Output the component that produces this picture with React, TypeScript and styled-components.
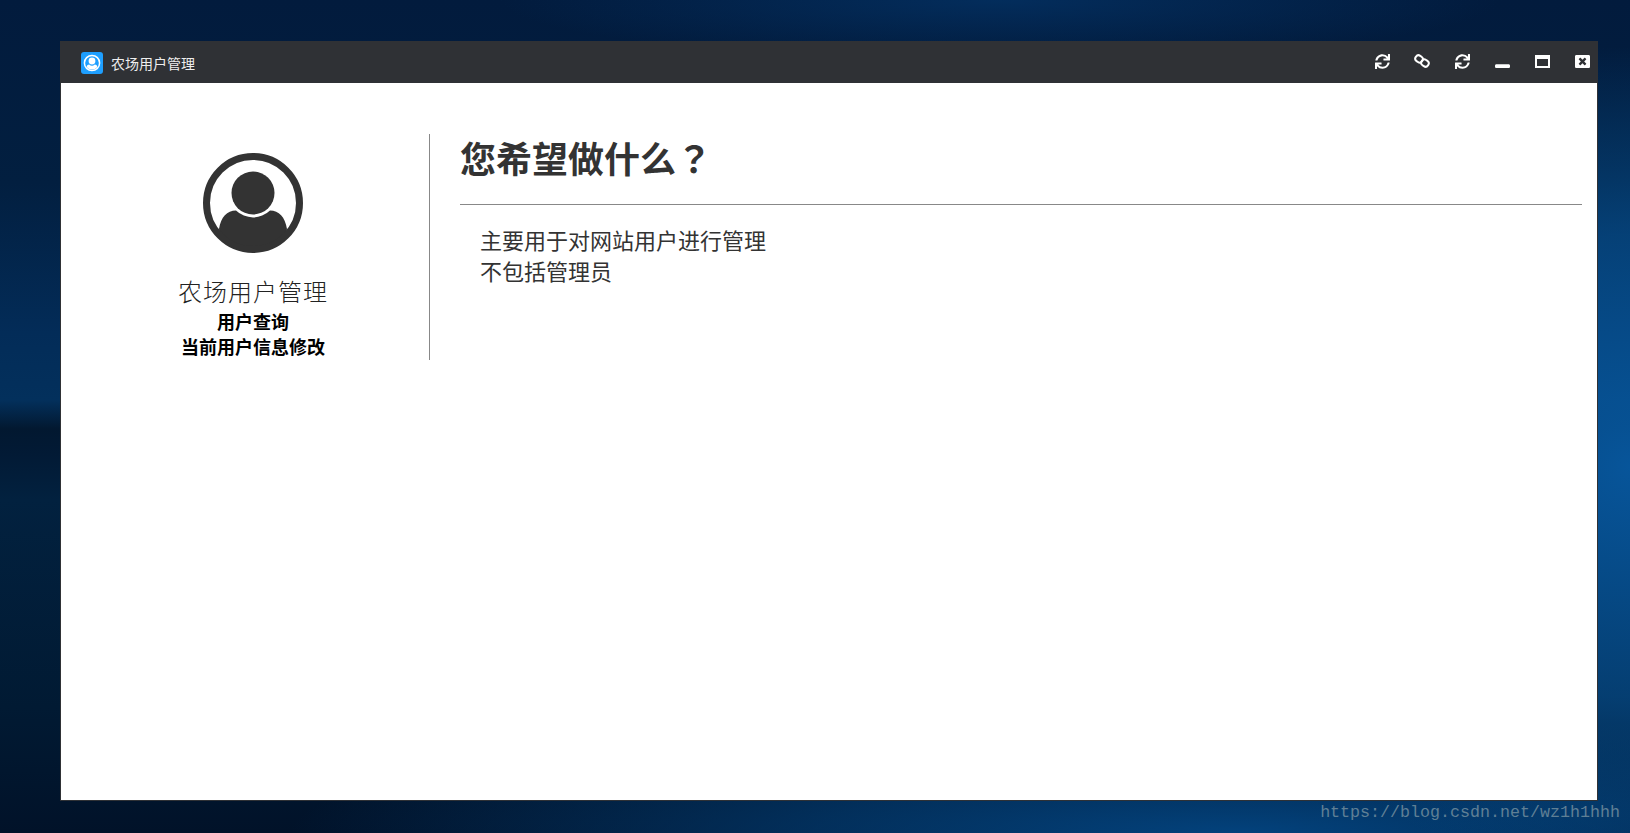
import React from "react";
import styled, { createGlobalStyle } from "styled-components";
import { FaSync, FaWindowClose, FaWindowMinimize } from "react-icons/fa";

const GlobalStyle = createGlobalStyle`
  html, body {
    margin: 0;
    padding: 0;
  }
  * {
    box-sizing: border-box;
  }
`;

const LinkIcon = () => (
  <svg width="16" height="16" viewBox="0 0 16 16">
    <g fill="none" stroke="#fff" strokeWidth="2" transform="rotate(35 8 8)">
      <rect x="0.6" y="4.8" width="7.6" height="6.4" rx="3" />
      <rect x="7.8" y="4.8" width="7.6" height="6.4" rx="3" />
    </g>
  </svg>
);

const MaximizeIcon = () => (
  <svg width="15" height="13" viewBox="0 0 15 13">
    <path d="M0 0 H15 V13 H0 Z M2 4 V11 H13 V4 Z" fill="#fff" fillRule="evenodd" />
  </svg>
);

const AppLogo = () => (
  <svg width="22" height="22" viewBox="0 0 22 22">
    <rect width="22" height="22" rx="3" fill="#1e9fff" />
    <circle cx="11" cy="11" r="7.6" fill="none" stroke="#fff" strokeWidth="1.5" />
    <circle cx="11" cy="9" r="3.4" fill="#fff" />
    <path
      d="M5.6 15 C6 13.2 7 12.6 8.2 12.5 A4 4 0 0 0 13.8 12.5 C15 12.6 16 13.2 16.4 15 A7 7 0 0 1 5.6 15 Z"
      fill="#fff"
    />
  </svg>
);

const UserAvatar = () => (
  <svg width="100" height="100" viewBox="0 0 100 100">
    <circle cx="50" cy="40" r="21.5" fill="#333" />
    <path
      d="M16 76 C18 64 24 57.5 33 57.5 A24.4 24.4 0 0 0 67 57.5 C76 57.5 82 64 84 76 L82 85 L50 98 L18 85 Z"
      fill="#333"
    />
    <circle cx="50" cy="50" r="46.5" fill="none" stroke="#333" strokeWidth="7" />
  </svg>
);

const App = () => {
  return (
    <Desktop>
      <GlobalStyle />
      <Window>
        <TitleBar>
          <AppInfo>
            <AppLogo />
            <AppName>农场用户管理</AppName>
          </AppInfo>
          <Controls>
            <ControlButton>
              <FaSync />
            </ControlButton>
            <ControlButton>
              <LinkIcon />
            </ControlButton>
            <ControlButton>
              <FaSync />
            </ControlButton>
            <ControlButton>
              <FaWindowMinimize />
            </ControlButton>
            <ControlButton>
              <MaximizeIcon />
            </ControlButton>
            <ControlButton>
              <FaWindowClose />
            </ControlButton>
          </Controls>
        </TitleBar>
        <Content>
          <Sidebar>
            <AvatarWrap>
              <UserAvatar />
            </AvatarWrap>
            <SideTitle>农场用户管理</SideTitle>
            <SideItem>用户查询</SideItem>
            <SideItem>当前用户信息修改</SideItem>
          </Sidebar>
          <Main>
            <Heading>
              您希望做什么<Question>？</Question>
            </Heading>
            <Description>
              主要用于对网站用户进行管理
              <br />
              不包括管理员
            </Description>
          </Main>
        </Content>
      </Window>
      <Watermark>https://blog.csdn.net/wz1h1hhh</Watermark>
    </Desktop>
  );
};

export default App;

const Desktop = styled.div`
  position: relative;
  width: 1630px;
  height: 833px;
  overflow: hidden;
  padding: 41px 32px 31px 60px;
  font-family: "Noto Sans CJK SC", "Noto Sans", sans-serif;
  background:
    radial-gradient(ellipse 420px 420px at 100% 56%, #07559a 0%, rgba(6, 74, 134, 0.75) 55%, rgba(6, 74, 134, 0) 100%),
    radial-gradient(ellipse 950px 120px at 1240px 100%, #03427c 0%, rgba(3, 66, 124, 0.6) 45%, rgba(3, 66, 124, 0) 100%),
    radial-gradient(ellipse 500px 60px at 1000px 0%, #032d5c 0%, rgba(3, 45, 92, 0) 100%),
    linear-gradient(
      180deg,
      #021b3d 0%,
      #021f40 22%,
      #032c58 40%,
      #03305c 48%,
      #021830 51.5%,
      #021a35 54.5%,
      #02213f 60%,
      #011a33 85%,
      #011229 100%
    );
`;

const Window = styled.div`
  display: flex;
  flex-direction: column;
  width: 1538px;
  height: 760px;
  background: #fff;
  border: 1px solid #2f3135;
  border-top: none;
  border-radius: 2px 2px 0 0;
`;

const TitleBar = styled.div`
  display: flex;
  align-items: center;
  justify-content: space-between;
  flex: none;
  height: 42px;
  margin: 0 -1px;
  padding: 0 8px 0 21px;
  background: #2f3135;
`;

const AppInfo = styled.div`
  display: flex;
  align-items: center;
  gap: 8px;
  padding-top: 2px;
`;

const AppName = styled.span`
  font-size: 14px;
  line-height: 22px;
  color: #eee;
`;

const Controls = styled.div`
  display: flex;
  align-items: center;
  gap: 24px;
  padding-bottom: 2px;
`;

const ControlButton = styled.div`
  display: flex;
  align-items: center;
  justify-content: center;
  width: 16px;
  height: 16px;
  color: #fff;
  font-size: 15px;
`;

const Content = styled.div`
  display: flex;
  align-items: flex-start;
  padding: 51px 15px 0 16px;
`;

const Sidebar = styled.div`
  display: flex;
  flex-direction: column;
  align-items: center;
  flex: none;
  width: 353px;
  height: 226px;
  padding-top: 19px;
  border-right: 1px solid #888;
`;

const AvatarWrap = styled.div`
  width: 100px;
  height: 100px;
  margin-bottom: 22px;
`;

const SideTitle = styled.div`
  margin-bottom: 2px;
  font-size: 24px;
  font-weight: 300;
  line-height: 32px;
  letter-spacing: 1px;
  color: #222;
`;

const SideItem = styled.div`
  font-size: 18px;
  font-weight: 700;
  line-height: 25px;
  color: #000;
`;

const Main = styled.div`
  flex: 1;
  padding-left: 30px;
`;

const Heading = styled.h1`
  margin: 0;
  height: 71px;
  font-size: 36px;
  font-weight: 700;
  line-height: 46px;
  color: #333;
  border-bottom: 1px solid #888;
`;

const Question = styled.span`
  font-family: "Noto Sans CJK TC", sans-serif;
`;

const Description = styled.p`
  margin: 0;
  padding: 19px 0 0 20px;
  font-size: 22px;
  line-height: 31px;
  color: #333;
`;

const Watermark = styled.div`
  position: absolute;
  right: 10px;
  bottom: 9px;
  font-family: "Liberation Mono", monospace;
  font-size: 16.67px;
  line-height: 22px;
  color: #5f7f95;
`;
